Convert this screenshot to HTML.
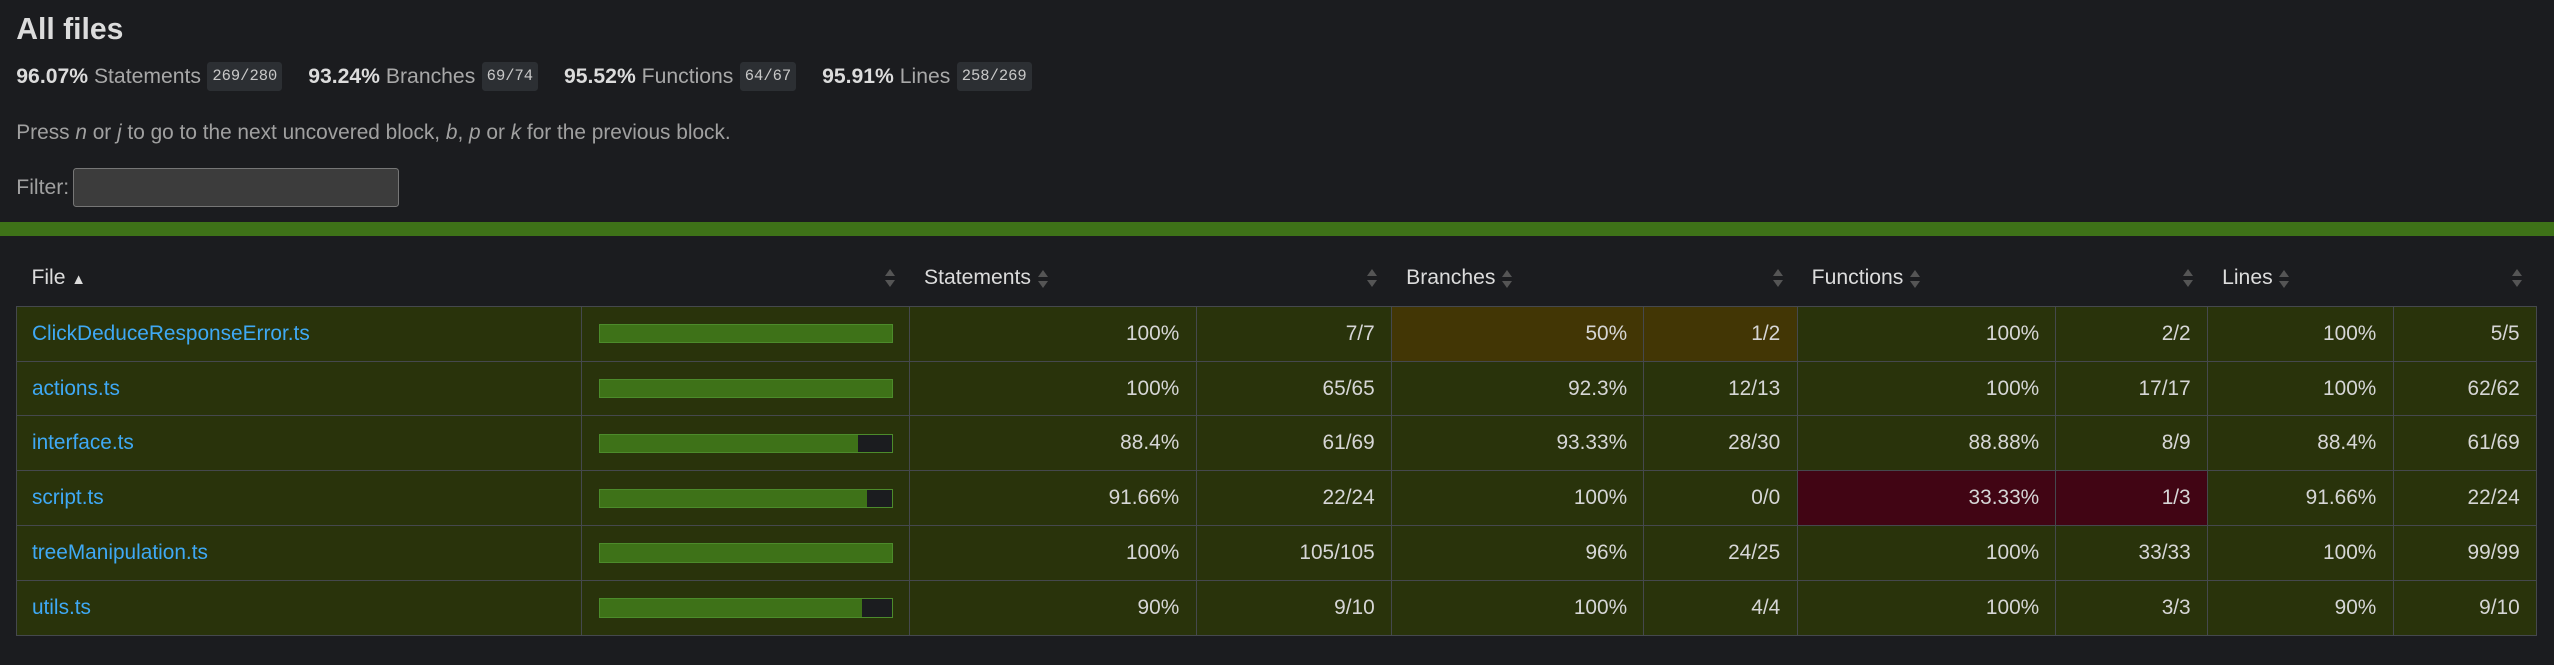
<!DOCTYPE html>
<html><head><meta charset="utf-8"><style>
html,body{margin:0;padding:0;background:#1b1c1f;}
body{zoom:1.6288;width:1568px;height:408px;overflow:hidden;font-family:"Liberation Sans",Arial,sans-serif;font-size:14px;color:#d6d6d6;position:relative;}
.a{position:absolute;white-space:nowrap;}
h1{position:absolute;left:10px;top:8px;margin:0;font-size:18.5px;font-weight:bold;color:#dcdcdc;}
.st{position:absolute;left:10px;top:38px;height:18px;line-height:18px;font-size:13px;}
.st span{display:inline-block;vertical-align:top}
.st b{color:#dcdcdc}
.q{color:#a8a8a8}
.bd{background:#2c2f33;border-radius:2px;font-family:"Liberation Mono",monospace;font-size:9.5px;padding:0 3px;height:18px;line-height:18px;color:#c8c8c8;margin:0 16px 0 4px}
.press{left:10px;top:74px;color:#a0a0a0;font-size:12.8px}
.filt{left:10px;top:108px;color:#a0a0a0;font-size:13px}
.inp{position:absolute;left:45px;top:103px;width:200px;height:24px;background:#3c3c3c;border:1px solid #767676;border-radius:2px;box-sizing:border-box}
.gbar{position:absolute;left:0;top:136px;width:1568px;height:9px;background:#3e7218}
table{position:absolute;left:10px;top:154px;border-collapse:collapse;table-layout:fixed;width:1547px}
th{height:33.7px;text-align:left;font-weight:normal;color:#dcdcdc;padding:0 9px;position:relative;font-size:13px}
td{height:33.7px;border:1px solid #45484d;background:#29330b;padding:0 10px;font-size:12.8px;text-align:right;box-sizing:border-box}
td.f{text-align:left;padding-left:9px}
td.f a{color:#3fa9f5;text-decoration:none}
td.m{background:#423605}
td.l{background:#410514}
.bar{height:12px;background:#1b1c1f;border:1px solid #4c8b2b;box-sizing:border-box;position:relative}
.bar i{position:absolute;left:0;top:0;bottom:0;background:#3e7218}
.s{display:inline-block;width:7px;height:11px;vertical-align:middle;position:relative;margin-left:4px}
.s:before,.s:after{content:"";position:absolute;left:0;border-left:3.5px solid transparent;border-right:3.5px solid transparent}
.s:before{top:0;border-bottom:4.5px solid #555}
.s:after{bottom:0;border-top:4.5px solid #555}
.r{position:absolute;right:8px;top:11px}
</style></head><body>
<h1>All files</h1>
<div class="st"><span><b>96.07%</b> <span class="q">Statements</span></span><span class="bd">269/280</span><span><b>93.24%</b> <span class="q">Branches</span></span><span class="bd">69/74</span><span><b>95.52%</b> <span class="q">Functions</span></span><span class="bd">64/67</span><span><b>95.91%</b> <span class="q">Lines</span></span><span class="bd">258/269</span></div>
<div class="a press">Press <i>n</i> or <i>j</i> to go to the next uncovered block, <i>b</i>, <i>p</i> or <i>k</i> for the previous block.</div>
<div class="a filt">Filter:</div><div class="inp"></div>
<div class="gbar"></div>
<table>
<colgroup><col style="width:347px"><col style="width:201px"><col style="width:176px"><col style="width:120px"><col style="width:155px"><col style="width:94px"><col style="width:159px"><col style="width:93px"><col style="width:114px"><col style="width:88px"></colgroup>
<tr><th>File <span style="font-size:9px">&#9650;</span></th><th><span class="s r"></span></th><th>Statements<span class="s"></span></th><th><span class="s r"></span></th><th>Branches<span class="s"></span></th><th><span class="s r"></span></th><th>Functions<span class="s"></span></th><th><span class="s r"></span></th><th>Lines<span class="s"></span></th><th><span class="s r"></span></th></tr>
<tr><td class="f"><a>ClickDeduceResponseError.ts</a></td><td><div class="bar"><i style="width:100%"></i></div></td><td>100%</td><td>7/7</td><td class="m">50%</td><td class="m">1/2</td><td>100%</td><td>2/2</td><td>100%</td><td>5/5</td></tr>
<tr><td class="f"><a>actions.ts</a></td><td><div class="bar"><i style="width:100%"></i></div></td><td>100%</td><td>65/65</td><td>92.3%</td><td>12/13</td><td>100%</td><td>17/17</td><td>100%</td><td>62/62</td></tr>
<tr><td class="f"><a>interface.ts</a></td><td><div class="bar"><i style="width:88.4%"></i></div></td><td>88.4%</td><td>61/69</td><td>93.33%</td><td>28/30</td><td>88.88%</td><td>8/9</td><td>88.4%</td><td>61/69</td></tr>
<tr><td class="f"><a>script.ts</a></td><td><div class="bar"><i style="width:91.66%"></i></div></td><td>91.66%</td><td>22/24</td><td>100%</td><td>0/0</td><td class="l">33.33%</td><td class="l">1/3</td><td>91.66%</td><td>22/24</td></tr>
<tr><td class="f"><a>treeManipulation.ts</a></td><td><div class="bar"><i style="width:100%"></i></div></td><td>100%</td><td>105/105</td><td>96%</td><td>24/25</td><td>100%</td><td>33/33</td><td>100%</td><td>99/99</td></tr>
<tr><td class="f"><a>utils.ts</a></td><td><div class="bar"><i style="width:90%"></i></div></td><td>90%</td><td>9/10</td><td>100%</td><td>4/4</td><td>100%</td><td>3/3</td><td>90%</td><td>9/10</td></tr>
</table>
</body></html>
